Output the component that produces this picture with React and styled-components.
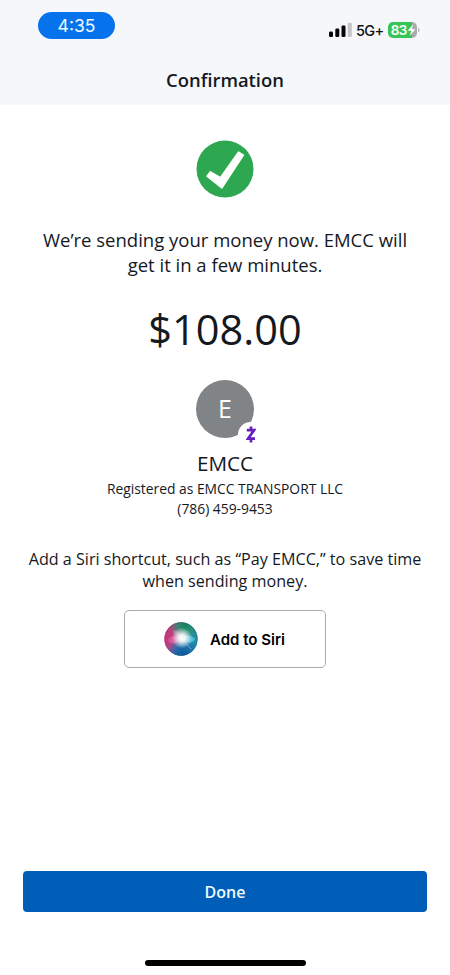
import React from "react";
import styled, { createGlobalStyle } from "styled-components";

const GlobalStyle = createGlobalStyle`
  * {
    box-sizing: border-box;
  }

  body {
    margin: 0;
    background: #fff;
    color: #14191f;
    font-family: "Open Sans", sans-serif;
  }

  p, h1, h2 {
    margin: 0;
    font-weight: 400;
  }
`;

const Screen = styled.div`
  display: flex;
  flex-direction: column;
  width: 450px;
  height: 975px;
  overflow: hidden;
`;

const Header = styled.header`
  height: 105px;
  background: #f5f7fb;
`;

const StatusBar = styled.div`
  display: flex;
  justify-content: space-between;
  height: 62px;
  padding: 12px 30px 0 38px;
`;

const TimePill = styled.div`
  width: 77px;
  height: 27px;
  border-radius: 14px;
  background: #0673ec;
  color: #eefaff;
  font: 400 17.5px/28px Inter, sans-serif;
  text-align: center;
`;

const StatusIcons = styled.div`
  display: flex;
  align-items: center;
  height: 22px;
  margin-top: 7px;
`;

const Network = styled.span`
  width: 28px;
  margin: 2px 4px 0 4px;
  color: #111;
  font: 500 14.5px/20px Inter, sans-serif;
  letter-spacing: -0.6px;
  white-space: nowrap;
`;

const Title = styled.h1`
  font-size: 18.4px;
  font-weight: 600;
  line-height: 36px;
  text-align: center;
`;

const Content = styled.main`
  display: flex;
  flex: 1;
  flex-direction: column;
  align-items: center;
  padding-top: 35px;
  text-align: center;
`;

const Message = styled.p`
  width: 400px;
  margin-top: 29px;
  font-size: 18.5px;
  line-height: 25px;
`;

const Amount = styled.h2`
  margin-top: 23px;
  font-size: 41.5px;
  line-height: 58px;
`;

const Avatar = styled.div`
  position: relative;
  width: 58px;
  height: 58px;
  margin-top: 22px;
  border-radius: 50%;
  background: #808487;
  color: #fff;
  font-size: 25px;
  line-height: 56px;
`;

const ZelleBadge = styled.span`
  position: absolute;
  top: 42px;
  left: 42px;
  display: flex;
  align-items: center;
  justify-content: center;
  width: 25px;
  height: 25px;
  border-radius: 50%;
  background: #fff;
`;

const Name = styled.h2`
  margin: 12px 0 3px;
  font-size: 20.7px;
  line-height: 26px;
`;

const Detail = styled.p`
  font-size: 13.85px;
  line-height: 20px;
`;

const SiriHint = styled.p`
  width: 410px;
  margin-top: 29px;
  font-size: 16.15px;
  line-height: 22px;
`;

const SiriButton = styled.button`
  display: flex;
  align-items: center;
  width: 202px;
  height: 58px;
  margin-top: 18px;
  padding: 0 0 0 39px;
  gap: 12px;
  border: 1px solid #aaa;
  border-radius: 5px;
  background: #fff;
  color: #000;
  font: 600 15px/20px Inter, sans-serif;
`;

const SiriLabel = styled.span`
  padding-top: 1px;
`;

const Footer = styled.footer`
  display: flex;
  flex-direction: column;
  align-items: center;
  height: 104px;
  padding: 0 23px;
`;

const DoneButton = styled.button`
  width: 404px;
  height: 41px;
  padding: 1px 0 0;
  border: 0;
  border-radius: 4px;
  background: #005eb8;
  color: #effaff;
  font: 600 16px/40px "Open Sans", sans-serif;
`;

const HomeIndicator = styled.div`
  width: 161px;
  height: 6px;
  margin-top: 48px;
  border-radius: 3px;
  background: #000;
`;

function SignalIcon() {
  return (
    <svg width="23" height="16" viewBox="0 0 23 16">
      <rect x="0" y="9.5" width="4" height="5.5" rx="1.3" fill="#050505" />
      <rect x="6.3" y="6.5" width="4" height="8.5" rx="1.3" fill="#050505" />
      <rect x="12.5" y="3.5" width="4" height="11.5" rx="1.3" fill="#050505" />
      <rect x="18.8" y="0.8" width="4" height="14.2" rx="1.3" fill="#c3c5c8" />
    </svg>
  );
}

function BatteryIcon() {
  return (
    <svg width="32" height="16" viewBox="0 0 32 16">
      <path d="M5 0h19v16H5a5 5 0 0 1-5-5V5a5 5 0 0 1 5-5z" fill="#38c558" />
      <path d="M24 0a5 5 0 0 1 5 5v6a5 5 0 0 1-5 5z" fill="#a9aaac" />
      <path d="M30 5.5c2 .8 2 4.2 0 5z" fill="#b4b5b8" />
      <text x="2.8" y="12.8" fill="#fff" fontFamily="Inter, sans-serif" fontSize="13.5" fontWeight="600" textLength="16.5">83</text>
      <path d="M25 2.5l-5.3 6.3h3.5l-1.3 5 5.5-6.6h-3.6z" fill="#fff" />
    </svg>
  );
}

function CheckIcon() {
  return (
    <svg width="58" height="58" viewBox="0 0 58 58">
      <circle cx="29" cy="29" r="28.5" fill="#2da850" />
      <path
        d="M11 36.2L14.4 31.8 24.4 37.7 42.6 12 47.4 15.2 25.8 48z"
        fill="#fff"
        stroke="#fff"
        strokeWidth="1.5"
        strokeLinejoin="round"
      />
    </svg>
  );
}

function ZelleIcon() {
  return (
    <svg width="10" height="17" viewBox="0 0 10 17">
      <path d="M.8 4.2H8L2 12.7H9M5 .5v3.8M5 12.7v3.8" fill="none" stroke="#6720bd" strokeWidth="2.7" />
    </svg>
  );
}

function SiriIcon() {
  return (
    <svg width="34" height="34" viewBox="0 0 34 34">
      <defs>
        <linearGradient id="orb" x1="0" y1="0.35" x2="1" y2="0.65">
          <stop offset="0" stopColor="#d52d75" />
          <stop offset="0.32" stopColor="#b04d88" />
          <stop offset="0.6" stopColor="#388f9c" />
          <stop offset="1" stopColor="#168eb1" />
        </linearGradient>
        <radialGradient id="green" cx="0.62" cy="0.08" r="0.47">
          <stop offset="0" stopColor="#16835c" />
          <stop offset="0.5" stopColor="#24906f" stopOpacity="0.8" />
          <stop offset="1" stopColor="#24906f" stopOpacity="0" />
        </radialGradient>
        <radialGradient id="blue" cx="0.56" cy="0.98" r="0.52">
          <stop offset="0" stopColor="#0a569f" />
          <stop offset="0.5" stopColor="#1766ad" stopOpacity="0.8" />
          <stop offset="1" stopColor="#1766ad" stopOpacity="0" />
        </radialGradient>
        <radialGradient id="glow" cx="0.53" cy="0.47" r="0.31">
          <stop offset="0" stopColor="#fff" />
          <stop offset="0.35" stopColor="#fff" stopOpacity="0.85" />
          <stop offset="1" stopColor="#fff" stopOpacity="0" />
        </radialGradient>
      </defs>
      <circle cx="17" cy="17" r="16.7" fill="url(#orb)" />
      <circle cx="17" cy="17" r="16.7" fill="url(#green)" />
      <circle cx="17" cy="17" r="16.7" fill="url(#blue)" />
      <path d="M4 18c3-5 8-5 13-1-4 5-10 7-13 1z" fill="#f36ab0" opacity="0.5" />
      <path d="M17 17c5-5 11-4 14 0-2 5-9 5-14 0z" fill="#65d8f3" opacity="0.6" />
      <path d="M9 8c6 0 8 4 8 9-5-2-8-5-8-9z" fill="#d8a0b5" opacity="0.4" />
      <path d="M18 17l9 10" fill="none" stroke="#b9d8fb" strokeWidth="0.8" opacity="0.6" />
      <circle cx="17" cy="17" r="16.7" fill="url(#glow)" />
      <circle cx="17" cy="17" r="16.2" fill="none" stroke="#465268" strokeWidth="0.8" opacity="0.45" />
    </svg>
  );
}

function App() {
  return (
    <Screen>
      <GlobalStyle />
      <Header>
        <StatusBar>
          <TimePill>4:35</TimePill>
          <StatusIcons>
            <SignalIcon />
            <Network>5G+</Network>
            <BatteryIcon />
          </StatusIcons>
        </StatusBar>
        <Title>Confirmation</Title>
      </Header>
      <Content>
        <CheckIcon />
        <Message>
          We’re sending your money now. EMCC will
          <br />
          get it in a few minutes.
        </Message>
        <Amount>$108.00</Amount>
        <Avatar>
          E
          <ZelleBadge>
            <ZelleIcon />
          </ZelleBadge>
        </Avatar>
        <Name>EMCC</Name>
        <Detail>Registered as EMCC TRANSPORT LLC</Detail>
        <Detail>(786) 459-9453</Detail>
        <SiriHint>
          Add a Siri shortcut, such as “Pay EMCC,” to save time
          <br />
          when sending money.
        </SiriHint>
        <SiriButton>
          <SiriIcon />
          <SiriLabel>Add to Siri</SiriLabel>
        </SiriButton>
      </Content>
      <Footer>
        <DoneButton>Done</DoneButton>
        <HomeIndicator />
      </Footer>
    </Screen>
  );
}

export default App;
